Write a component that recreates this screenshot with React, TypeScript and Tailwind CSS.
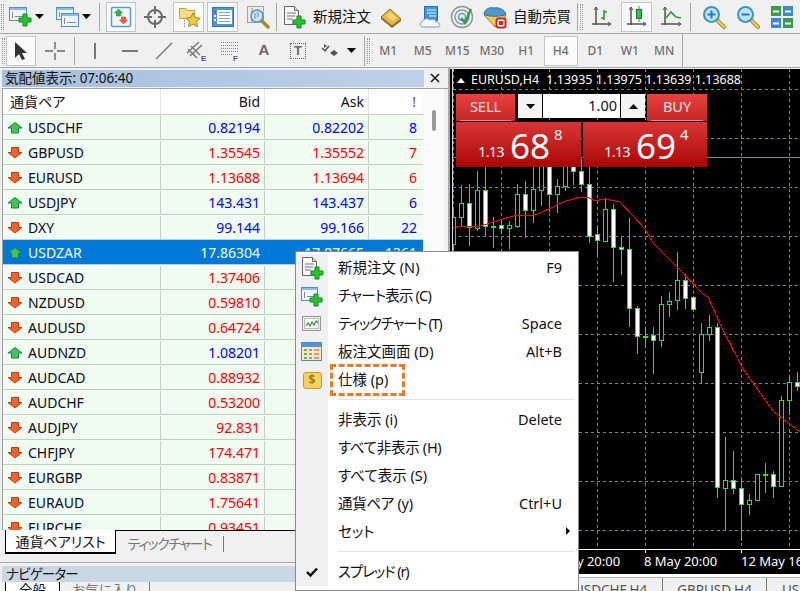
import type { ReactNode } from "react";

type Row = { name: string; bid: string; ask: string; spread: string; up: boolean; blue?: boolean };

const rows: Row[] = [
  { name: "USDCHF", bid: "0.82194", ask: "0.82202", spread: "8", up: true, blue: true },
  { name: "GBPUSD", bid: "1.35545", ask: "1.35552", spread: "7", up: false },
  { name: "EURUSD", bid: "1.13688", ask: "1.13694", spread: "6", up: false },
  { name: "USDJPY", bid: "143.431", ask: "143.437", spread: "6", up: true, blue: true },
  { name: "DXY", bid: "99.144", ask: "99.166", spread: "22", up: false, blue: true },
  { name: "USDZAR", bid: "17.86304", ask: "17.87665", spread: "1361", up: true },
  { name: "USDCAD", bid: "1.37406", ask: "", spread: "", up: false },
  { name: "NZDUSD", bid: "0.59810", ask: "", spread: "", up: false },
  { name: "AUDUSD", bid: "0.64724", ask: "", spread: "", up: false },
  { name: "AUDNZD", bid: "1.08201", ask: "", spread: "", up: true, blue: true },
  { name: "AUDCAD", bid: "0.88932", ask: "", spread: "", up: false },
  { name: "AUDCHF", bid: "0.53200", ask: "", spread: "", up: false },
  { name: "AUDJPY", bid: "92.831", ask: "", spread: "", up: false },
  { name: "CHFJPY", bid: "174.471", ask: "", spread: "", up: false },
  { name: "EURGBP", bid: "0.83871", ask: "", spread: "", up: false },
  { name: "EURAUD", bid: "1.75641", ask: "", spread: "", up: false },
  { name: "EURCHF", bid: "0.93451", ask: "", spread: "", up: false },
];

// x, high, low, body top, body bottom, white body
const candles: [number, number, number, number, number, boolean][] = [
  [453, 210, 250, 218, 245, false],
  [461, 186, 228, 204, 218, false],
  [469, 185, 247, 204, 228, true],
  [477, 172, 232, 191, 229, false],
  [485, 160, 237, 191, 227, true],
  [493, 218, 249, 227, 227, false],
  [501, 220, 235, 226, 229, true],
  [509, 222, 250, 226, 229, false],
  [517, 185, 229, 195, 227, false],
  [525, 182, 239, 195, 211, true],
  [533, 160, 224, 190, 211, false],
  [541, 160, 207, 160, 191, false],
  [549, 160, 213, 160, 195, true],
  [557, 180, 214, 187, 195, false],
  [565, 160, 192, 160, 187, false],
  [573, 160, 186, 160, 172, true],
  [581, 160, 193, 172, 185, true],
  [589, 160, 244, 185, 237, true],
  [597, 227, 256, 235, 241, true],
  [605, 199, 243, 210, 242, false],
  [613, 205, 283, 210, 248, true],
  [621, 238, 276, 248, 250, true],
  [629, 219, 328, 250, 309, true],
  [637, 307, 355, 309, 337, true],
  [645, 328, 346, 337, 337, false],
  [653, 328, 375, 336, 341, true],
  [661, 297, 348, 305, 341, false],
  [669, 293, 318, 302, 305, false],
  [677, 253, 311, 281, 301, false],
  [685, 275, 310, 281, 299, true],
  [693, 297, 310, 298, 310, true],
  [701, 324, 384, 335, 373, false],
  [709, 316, 342, 328, 335, false],
  [717, 324, 499, 328, 488, true],
  [725, 438, 531, 481, 489, false],
  [733, 452, 495, 481, 489, true],
  [741, 480, 542, 489, 505, true],
  [749, 495, 516, 501, 505, false],
  [757, 475, 502, 475, 501, false],
  [765, 464, 494, 475, 475, false],
  [773, 472, 499, 475, 487, true],
  [781, 397, 487, 401, 487, false],
  [789, 377, 416, 383, 401, false],
  [797, 373, 392, 383, 387, true],
];

const ma =
  "453,228 457,228 480,227 490,224 500,221 513,217 520,216 530,217 540,214 553,208 563,203 573,200 580,198 587,198 595,202 603,200 610,201 620,203 633,217 645,230 653,244 677,268 703,295 708,298 720,325 743,370 773,412 783,420 800,433";

const Plus = ({ x, y, s = 1 }: { x: number; y: number; s?: number }) => (
  <path
    transform={`translate(${x} ${y}) scale(${s})`}
    d="M4.500 .5h4v4h4v4h-4v4h-4v-4h-4v-4h4z"
    fill="#27c427"
    stroke="#0d8a26"
  />
);

const Win = ({ x, y, w, h }: { x: number; y: number; w: number; h: number }) => (
  <g>
    <rect x={x + 0.5} y={y + 0.5} width={w} height={h} fill="#eef5fc" stroke="#4c90d0" />
    <rect x={x + 1} y={y + 1} width={w - 1} height={2} fill="#8dbbe6" />
    <path d={`M${x + 3.5} ${y + 5}v${h - 7}M${x + 6} ${y + h - 3.500}h${w - 8}`} stroke="#7a8a9a" fill="none" />
  </g>
);

const Lens = ({ plus, minus }: { plus?: boolean; minus?: boolean }) => (
  <svg width="26" height="26" viewBox="0 0 26 26">
    <path d="M16 16l7 7" stroke="#a88a20" strokeWidth="4" strokeLinecap="round" />
    <path d="M16 16l7 7" stroke="#f0d060" strokeWidth="2" strokeLinecap="round" />
    <circle cx="10.500" cy="10.500" r="7.500" fill="#bfe3f7" stroke="#3f93c9" strokeWidth="2" />
    {plus && <path d="M6.500 10.500h8M10.500 6.500v8" stroke="#2a78b8" strokeWidth="2" />}
    {minus && <path d="M6.500 10.500h8" stroke="#2a78b8" strokeWidth="2" />}
  </svg>
);

const DocPlus = () => (
  <svg width="24" height="24" viewBox="0 0 24 24">
    <path d="M2.500 1.500h10l4 4v14h-14z" fill="#f6f6f6" stroke="#666" />
    <path d="M12.500 1.500v4h4" fill="#ddd" stroke="#666" />
    <path d="M5 8h9M5 11h8M5 14h6" stroke="#777" />
    <Plus x={10.500} y={10.500} />
  </svg>
);

const ChartPlus = () => (
  <svg width="24" height="24" viewBox="0 0 24 24">
    <Win x={1} y={3} w={16} h={13} />
    <Plus x={9.500} y={9.500} />
  </svg>
);

const TickBox = () => (
  <svg width="20" height="16" viewBox="0 0 20 16">
    <rect x=".5" y=".5" width="18" height="14" fill="#eee" stroke="#999" />
    <rect x="2.500" y="2.500" width="14" height="10" fill="#fff" stroke="#bbb" />
    <path d="M4 10l2-3 2 3 2-4 2 3 2-4 2 2" fill="none" stroke="#3a9a3a" strokeWidth="1.300" />
  </svg>
);

const DepthBox = () => (
  <svg width="22" height="20" viewBox="0 0 22 20">
    <rect x=".5" y=".5" width="20" height="18" fill="#f3e9c8" stroke="#4c90d0" />
    <rect x="1" y="1" width="19" height="4" fill="#4f94d4" />
    <path d="M3 7h3v2H3zm0 4h3v2H3zm0 4h3v2H3z" fill="#7aa850" />
    <path d="M8 7h3v2H8zm0 4h3v2H8zm0 4h3v2H8z" fill="#9a9a9a" />
    <path d="M13 7h5v2h-5zm0 4h5v2h-5zm0 4h5v2h-5z" fill="#e89a80" />
  </svg>
);

const Arrow = ({ up }: { up: boolean }) => (
  <svg width="16" height="12" viewBox="0 0 16 12" className="shrink-0">
    {up ? (
      <path d="M8 .5l7 5.500h-3.500v5h-7v-5H1z" fill="#41c159" stroke="#15893a" strokeLinejoin="round" />
    ) : (
      <path d="M4.500 .5h7v5H15l-7 5.500L1 5.500h3.500z" fill="#f2622c" stroke="#bf3c14" strokeLinejoin="round" />
    )}
  </svg>
);

const Caret = ({ className = "" }: { className?: string }) => (
  <svg width="9" height="5" viewBox="0 0 9 5" className={className}>
    <path d="M0 0h9L4.500 5z" fill="#000" />
  </svg>
);

const Cell = ({ w, children, pressed }: { w: string; children?: ReactNode; pressed?: boolean }) => (
  <div
    className={`${w} h-[30px] shrink-0 flex items-center justify-center ${
      pressed ? "bg-[#fafafa] border border-[#c4c4c4] shadow-[inset_0_0_0_1px_#fff]" : ""
    }`}
  >
    {children}
  </div>
);

const Sep = ({ w }: { w: string }) => (
  <div className={`${w} h-[28px] shrink-0 flex justify-center`}>
    <div className="w-px h-full bg-[#a8a8a8]" />
  </div>
);

const Handle = () => <div className="w-[3px] h-[26px] shrink-0 border-x border-dotted border-[#9a9a9a]" />;

const Period = ({ label, pressed }: { label: string; pressed?: boolean }) => (
  <div
    className={`w-[34.500px] h-[30px] shrink-0 flex items-center justify-center pt-[1px] text-[12px] font-medium text-[#707070] ${
      pressed ? "bg-[#fafafa] border border-[#c4c4c4]" : ""
    }`}
  >
    {label}
  </div>
);

const TopBar = () => (
  <div className="h-[34px] flex items-center border-b border-[#a6a6a6] overflow-hidden">
    <div className="w-[8px] shrink-0 pl-[1px]">
      <Handle />
    </div>
    <Cell w="w-[24px]">
      <svg width="24" height="22" viewBox="0 0 24 22">
        <Win x={1} y={1} w={17} h={13} />
        <Plus x={10.500} y={7.500} />
      </svg>
    </Cell>
    <Cell w="w-[14px]">
      <Caret />
    </Cell>
    <div className="w-[9px] shrink-0" />
    <Cell w="w-[24px]">
      <svg width="24" height="22" viewBox="0 0 24 22">
        <Win x={1} y={1} w={17} h={12} />
        <Win x={6} y={7} w={17} h={13} />
      </svg>
    </Cell>
    <Cell w="w-[14px]">
      <Caret />
    </Cell>
    <Sep w="w-[13px]" />
    <Cell w="w-[30px]" pressed>
      <svg width="22" height="22" viewBox="0 0 22 22">
        <rect x="1.500" y="1.500" width="19" height="19" rx="1.500" fill="#f4f8fc" stroke="#5a9bd5" strokeWidth="1.500" />
        <path d="M8.500 3l4 4h-2v3h-4V7h-2z" fill="#2fb64a" stroke="#15893a" strokeWidth=".6" />
        <path d="M11.500 11h4v3h2l-4 4-4-4h2z" fill="#f2622c" stroke="#bf3c14" strokeWidth=".6" />
      </svg>
    </Cell>
    <div className="w-[4px] shrink-0" />
    <Cell w="w-[30px]">
      <svg width="22" height="22" viewBox="0 0 22 22">
        <circle cx="11" cy="11" r="7" fill="none" stroke="#6a6a6a" strokeWidth="2" />
        <path d="M11 0v8M11 14v8M0 11h8M14 11h8" stroke="#6a6a6a" strokeWidth="2" />
      </svg>
    </Cell>
    <div className="w-[3px] shrink-0" />
    <Cell w="w-[31px]" pressed>
      <svg width="24" height="24" viewBox="0 0 24 24">
        <path d="M2.500 3.500h6l2 2h7v8h-15z" fill="#f6dc88" stroke="#c9a430" />
        <path d="M7.500 15v7" stroke="#777" strokeDasharray="1.500 1.500" />
        <path d="M16 8l2.200 4.600 5 .6-3.700 3.400 1 5L16 19l-4.500 2.600 1-5-3.700-3.400 5-.6z" fill="#f4c93e" stroke="#a98318" />
      </svg>
    </Cell>
    <div className="w-[3px] shrink-0" />
    <Cell w="w-[31px]" pressed>
      <svg width="22" height="20" viewBox="0 0 22 20">
        <rect x=".5" y=".5" width="21" height="19" fill="#4f96d6" stroke="#2f78bc" />
        <rect x="5" y="3" width="15" height="14" fill="#fff" />
        <path d="M2 4h2v2H2z" fill="#d33" />
        <path d="M2 8h2v2H2zM2 12h2v2H2z" fill="#f0f0f0" />
        <path d="M7 5.500h11M7 8.500h11M7 11.500h11M7 14.500h11" stroke="#7aa5cf" />
      </svg>
    </Cell>
    <div className="w-[5px] shrink-0" />
    <Cell w="w-[30px]">
      <svg width="24" height="24" viewBox="0 0 24 24">
        <rect x="1.500" y="1.500" width="16" height="16" fill="#f2e8e4" stroke="#a8a090" />
        <path d="M6 3v14M11 4v12" stroke="#888" />
        <path d="M15 15l7 7" stroke="#a88a20" strokeWidth="3.500" strokeLinecap="round" />
        <circle cx="11" cy="11" r="6" fill="#c5e6f7" fillOpacity=".9" stroke="#4d9ac9" strokeWidth="1.600" />
        <path d="M9 8v6M12 7v5" stroke="#888" />
      </svg>
    </Cell>
    <Sep w="w-[7px]" />
    <div className="w-[2px] shrink-0" />
    <Cell w="w-[24px]">
      <DocPlus />
    </Cell>
    <div className="w-[7px] shrink-0" />
    <div className="w-[66px] shrink-0 text-[14.500px] leading-none text-[#111] whitespace-nowrap">新規注文</div>
    <Cell w="w-[24px]">
      <svg width="24" height="22" viewBox="0 0 24 22">
        <path d="M2 11l9-8 11 10-9 7z" fill="#e5b640" stroke="#8a6a20" />
        <path d="M7 10l4-4 7 6-4 3z" fill="#f4d675" />
        <path d="M2 11v2l11 9 9-7v-2l-9 7z" fill="#8f6d22" />
      </svg>
    </Cell>
    <div className="w-[16px] shrink-0" />
    <Cell w="w-[24px]">
      <svg width="24" height="24" viewBox="0 0 24 24">
        <rect x="5.500" y="1.500" width="13" height="14" fill="#3e97dd" stroke="#2a6da8" />
        <path d="M8 5h9M8 8h9M10 11h7" stroke="#e4f2fc" />
        <path d="M4 22c-3 0-4-4-1-5 1-4 6-4 8-2 3-2 6 0 6 2 4 0 5 5 2 5z" fill="#f4f6f8" stroke="#7f9ab0" />
      </svg>
    </Cell>
    <div className="w-[7px] shrink-0" />
    <Cell w="w-[24px]">
      <svg width="24" height="24" viewBox="0 0 24 24">
        <circle cx="12" cy="12" r="10.500" fill="#eaeff2" stroke="#8a959c" strokeWidth="1.500" />
        <circle cx="12" cy="12" r="7" fill="none" stroke="#8a9aa3" strokeWidth="1.500" />
        <circle cx="12" cy="12" r="3.500" fill="none" stroke="#5aa2c9" strokeWidth="1.500" />
        <path d="M11 13l4 5 6-14" fill="none" stroke="#2f9a3f" strokeWidth="2.200" />
      </svg>
    </Cell>
    <div className="w-[9px] shrink-0" />
    <Cell w="w-[24px]">
      <svg width="24" height="24" viewBox="0 0 24 24">
        <path d="M1 10l11 12 8-6 3-6z" fill="#f0cb52" stroke="#a5811f" />
        <path d="M1 9c1-6 7-7 10-6 4-1 10 1 12 6-4 3-18 3-22 0z" fill="#4f98d0" stroke="#2f6e9f" />
        <rect x="13.500" y="13.500" width="9" height="9" rx="2" fill="#fff" stroke="#d22" strokeWidth="2" />
        <rect x="16" y="16" width="4" height="4" fill="#d22" />
      </svg>
    </Cell>
    <div className="w-[6px] shrink-0" />
    <div className="w-[64px] shrink-0 text-[14.500px] leading-none text-[#111] whitespace-nowrap">自動売買</div>
    <div className="w-px h-[28px] shrink-0 bg-[#a8a8a8]" />
    <div className="w-[2px] shrink-0" />
    <Handle />
    <div className="w-[6px] shrink-0" />
    <Cell w="w-[26px]">
      <svg width="22" height="22" viewBox="0 0 22 22">
        <path d="M5 1v18M1 18h19" stroke="#4a5a4a" strokeWidth="1.500" />
        <path d="M3 4l2-3 2 3M17 16l3 2-3 2" fill="none" stroke="#4a5a4a" />
        <path d="M13 4v10M13 6h3M10 12h3" stroke="#2e9a3a" strokeWidth="1.600" fill="none" />
      </svg>
    </Cell>
    <div className="w-[6px] shrink-0" />
    <Cell w="w-[31px]" pressed>
      <svg width="22" height="24" viewBox="0 0 22 24">
        <path d="M5 2v18M1 19h19" stroke="#4a5a4a" strokeWidth="1.500" />
        <path d="M3 5l2-3 2 3M17 17l3 2-3 2" fill="none" stroke="#4a5a4a" />
        <path d="M13 1v16" stroke="#2e9a3a" />
        <rect x="10.500" y="4.500" width="5" height="9" fill="#2fc144" stroke="#1a7d2c" />
      </svg>
    </Cell>
    <div className="w-[7px] shrink-0" />
    <Cell w="w-[26px]">
      <svg width="24" height="22" viewBox="0 0 24 22">
        <path d="M5 1v18M1 18h20" stroke="#4a5a4a" strokeWidth="1.500" />
        <path d="M3 4l2-3 2 3M18 16l3 2-3 2" fill="none" stroke="#4a5a4a" />
        <path d="M6 12l5-6 5 5 5 1" fill="none" stroke="#2e9a3a" strokeWidth="1.600" />
      </svg>
    </Cell>
    <Sep w="w-[10px]" />
    <div className="w-[6px] shrink-0" />
    <Cell w="w-[26px]">
      <Lens plus />
    </Cell>
    <div className="w-[8px] shrink-0" />
    <Cell w="w-[26px]">
      <Lens minus />
    </Cell>
    <div className="w-[9px] shrink-0" />
    <Cell w="w-[24px]">
      <svg width="22" height="22" viewBox="0 0 22 22">
        <rect width="10" height="10" fill="#3c9a4c" />
        <rect x="12" width="10" height="10" fill="#3b8bd3" />
        <rect y="12" width="10" height="10" fill="#3b8bd3" />
        <rect x="12" y="12" width="10" height="10" fill="#3c9a4c" />
        <path d="M2 4.500h6v2H2zm12 0h6v2h-6zM2 16.500h6v2H2zm12 0h6v2h-6z" fill="#fff" />
      </svg>
    </Cell>
  </div>
);

const DrawBar = () => (
  <div className="h-[34px] flex items-center border-b border-[#a6a6a6] overflow-hidden">
    <div className="w-[6px] shrink-0 pl-[2px]">
      <Handle />
    </div>
    <Cell w="w-[30px]" pressed>
      <svg width="16" height="20" viewBox="0 0 16 20">
        <path d="M2 1v16l4-4 3 6 3-1-3-6h5z" fill="#333" />
      </svg>
    </Cell>
    <div className="w-[4px] shrink-0" />
    <Cell w="w-[30px]">
      <svg width="22" height="22" viewBox="0 0 22 22">
        <path d="M1 11h8M13 11h8M11 2v7M11 13v7" stroke="#666" strokeWidth="1.400" />
      </svg>
    </Cell>
    <Sep w="w-[8px]" />
    <Cell w="w-[34px]">
      <div className="w-[2px] h-[16px] bg-[#777]" />
    </Cell>
    <Cell w="w-[36px]">
      <div className="w-[16px] h-[2px] bg-[#777]" />
    </Cell>
    <Cell w="w-[32px]">
      <svg width="18" height="18" viewBox="0 0 18 18">
        <path d="M1 17L17 1" stroke="#777" strokeWidth="1.500" />
      </svg>
    </Cell>
    <Cell w="w-[34px]">
      <svg width="22" height="22" viewBox="0 0 22 22">
        <path d="M1 13L13 2M4 16L16 5M2 9l9 9M5 6l9 9" stroke="#777" strokeWidth="1.500" />
        <text x="15" y="21" fontSize="8" fontWeight="700" fill="#555" fontFamily="Liberation Sans">E</text>
      </svg>
    </Cell>
    <Cell w="w-[33px]">
      <svg width="22" height="22" viewBox="0 0 22 22">
        <path d="M1 2.500h18M1 5.500h18M1 8.500h18M1 11.500h18M1 14.500h12" stroke="#888" strokeDasharray="1 1" />
        <text x="13" y="21" fontSize="8" fontWeight="700" fill="#555" fontFamily="Liberation Sans">F</text>
      </svg>
    </Cell>
    <Cell w="w-[34px]">
      <span className="text-[15px] font-bold text-[#666] font-['Liberation_Sans',sans-serif]">A</span>
    </Cell>
    <Cell w="w-[34px]">
      <div className="w-[16px] h-[16px] border border-dotted border-[#666] flex items-center justify-center text-[13px] font-bold leading-none text-[#666] font-['Liberation_Sans',sans-serif]">
        T
      </div>
    </Cell>
    <Cell w="w-[32px]">
      <svg width="20" height="16" viewBox="0 0 20 16">
        <path d="M1 5l3 3 4-5" fill="none" stroke="#555" strokeWidth="1.500" />
        <path d="M3 1l3 2-3 2zM9 10l4-3 4 3-4 3z" fill="#555" />
      </svg>
    </Cell>
    <div className="w-[11px] shrink-0 flex justify-start">
      <Caret />
    </div>
    <div className="w-[6px] shrink-0" />
    <div className="w-px h-[30px] shrink-0 bg-[#a8a8a8]" />
    <div className="w-[2px] shrink-0" />
    <Handle />
    <div className="w-[1px] shrink-0" />
    <Period label="M1" />
    <Period label="M5" />
    <Period label="M15" />
    <Period label="M30" />
    <Period label="H1" />
    <Period label="H4" pressed />
    <Period label="D1" />
    <Period label="W1" />
    <Period label="MN" />
    <div className="w-px h-[34px] shrink-0 bg-[#a8a8a8]" />
  </div>
);

const WatchRow = ({ row }: { row: Row }) => {
  const selected = row.name === "USDZAR";
  const price = selected ? "text-white" : row.blue ? "text-[#0000ff]" : "text-[#ff0000]";
  const line = selected ? "border-[#0078d7]" : "border-[#c4cfc4]";
  return (
    <div className={`h-[25px] flex pt-px border-b border-[#c4cfc4] ${selected ? "bg-[#0078d7]" : "bg-[#f1fcf1]"}`}>
      <div className={`w-[158px] flex items-center gap-[5px] pl-[4px] border-r ${line} ${selected ? "text-white" : "text-[#0a0a1e]"}`}>
        <Arrow up={row.up} />
        <span>{row.name}</span>
      </div>
      <div className={`w-[104px] flex items-center justify-end pr-[4px] border-r ${line} ${price}`}>{row.bid}</div>
      <div className={`w-[104px] flex items-center justify-end pr-[4px] border-r ${line} ${price}`}>{row.ask}</div>
      <div className={`w-[54px] flex items-center justify-end pr-[6px] ${price}`}>{row.spread}</div>
    </div>
  );
};

const MarketWatch = () => (
  <div className="h-[462px] shrink-0 flex flex-col">
    <div className="h-[20px] flex items-center">
      <div className="w-[422px] ml-[2px] h-[17px] pl-[3px] flex items-center bg-gradient-to-r from-[#a5bedb] to-[#bdd2ea] text-[13.500px] text-[#111]">
        気配値表示: 07:06:40
      </div>
      <svg width="10" height="10" viewBox="0 0 10 10" className="ml-[6px]">
        <path d="M1 1l8 8M9 1l-8 8" stroke="#111" strokeWidth="1.500" />
      </svg>
    </div>
    <div className="flex-1 flex overflow-hidden ml-[2px] border-t border-l border-[#a0a0a0]">
      <div className="w-[420px] text-[14px] leading-none">
        <div className="h-[26px] flex bg-white border-b border-[#c4cfc4] text-[#111]">
          <div className="w-[158px] flex items-center pl-[7px] border-r border-[#e4e4e4]">通貨ペア</div>
          <div className="w-[104px] flex items-center justify-end pr-[4px] border-r border-[#e4e4e4]">Bid</div>
          <div className="w-[104px] flex items-center justify-end pr-[4px] border-r border-[#e4e4e4]">Ask</div>
          <div className="w-[54px] flex items-center justify-end pr-[7px] text-[#555]">!</div>
        </div>
        {rows.map((row) => (
          <WatchRow key={row.name} row={row} />
        ))}
      </div>
      <div className="w-[21px] bg-[#fafafa] flex justify-center pt-[21px]">
        <div className="w-[4px] h-[21px] rounded-full bg-[#9a9a9a]" />
      </div>
    </div>
  </div>
);

const LeftPanel = () => (
  <div className="w-[450px] shrink-0 flex flex-col border-r-2 border-[#a8a8a8] overflow-hidden">
    <MarketWatch />
    <div className="h-[32px] shrink-0 border-t border-black ml-[5px] flex items-start text-[14px] whitespace-nowrap">
      <div className="h-[24px] w-[111px] -mt-px bg-white border-x border-black border-b-2 flex items-center justify-center text-[#111]">
        通貨ペアリスト
      </div>
      <div className="w-[107px] h-[24px] flex items-center justify-center tracking-[-1.4px] text-[#777]">ティックチャート</div>
      <div className="w-px h-[16px] mt-[5px] bg-[#777]" />
    </div>
    <div className="h-[4px] shrink-0 border-t border-[#a8a8a8]" />
    <div className="h-[16px] shrink-0 ml-[2px] pl-[4px] flex items-center bg-[#c9d6e4] text-[13.500px] tracking-[-0.8px] text-[#111]">ナビゲーター</div>
    <div className="h-[9px] shrink-0 ml-[5px] flex text-[13.500px] leading-[16px] overflow-hidden whitespace-nowrap">
      <div className="w-[55px] bg-white border-x border-black text-center text-[#111]">全般</div>
      <div className="w-[89px] text-center text-[#777]">お気に入り</div>
      <div className="w-px bg-[#777]" />
    </div>
  </div>
);

const Chart = () => (
  <svg width="347" height="504" viewBox="453 70 347 504" className="block" fontFamily="Noto Sans">
    {[453, 501, 549, 597, 645, 693, 741, 789].map((x) => (
      <path key={x} d={`M${x + 0.5} 70V550`} stroke="#778899" strokeDasharray="3 3" />
    ))}
    {[90, 139, 188, 237, 286, 335, 384, 433, 482, 531].map((y) => (
      <path key={y} d={`M453 ${y + 0.5}H800`} stroke="#778899" strokeDasharray="3 3" />
    ))}
    <path d="M453 158.500H800" stroke="#778899" />
    {candles.map(([x, high, low, top, bottom, white]) => (
      <g key={x} shapeRendering="crispEdges">
        <path d={`M${x + 0.5} ${high}V${low}`} stroke="#00ff00" />
        {top === bottom ? (
          <path d={`M${x - 2} ${top + 0.5}h5`} stroke="#00ff00" strokeWidth="2" />
        ) : (
          <rect x={x - 1.5} y={top + 0.5} width={4} height={bottom - top} fill={white ? "#fff" : "#000"} stroke="#00ff00" />
        )}
      </g>
    ))}
    <polyline points={ma} fill="none" stroke="#ff0000" shapeRendering="crispEdges" />
    <path d="M453 550.500H800M549.500 550v4M645.500 550v4M741.500 550v4" stroke="#fff" />
    <g fill="#fff" fontSize="13">
      <text x="547" y="567">7 May 20:00</text>
      <text x="644" y="567">8 May 20:00</text>
      <text x="741" y="567">12 May 16:00</text>
    </g>
  </svg>
);

const Control = ({ children, w }: { children: ReactNode; w: string }) => (
  <div className={`${w} h-full bg-[#f4f4f4] flex items-center justify-center`}>{children}</div>
);

const Quote = ({ big, small, w }: { big: string; small: string; w: string }) => (
  <div className={`${w} h-[45px] bg-gradient-to-b from-[#d93434] to-[#ab0000] flex items-end justify-end pr-[19px] text-white`}>
    <span className="text-[14px] tracking-[-0.5px] leading-none mb-[8px] mr-[6px]">1.13</span>
    <span className="text-[35px] leading-none mb-[4px] mr-[4px]">{big}</span>
    <span className="text-[15px] leading-none mb-[25px] w-[8px]">{small}</span>
  </div>
);

const OrderPanel = () => (
  <div className="absolute left-[6px] top-[25px] w-[251px] flex flex-col gap-[1px] text-white">
    <div className="flex h-[27px]">
      <div className="w-[59px] bg-gradient-to-b from-[#ea4040] to-[#c82525] px-[4px] flex flex-col">
        <div className="flex-1 flex items-center justify-center text-[14.500px] text-[#ffe2e2]">SELL</div>
        <div className="h-px bg-[#f28080]" />
      </div>
      <div className="w-[3px]" />
      <div className="w-[127px] h-[24px] flex gap-[1px] text-[#111]">
        <Control w="w-[24px]">
          <Caret />
        </Control>
        <div className="w-[77px] h-full bg-white flex items-center justify-end pr-[3px] text-[14.500px]">1.00</div>
        <Control w="w-[24px]">
          <Caret className="rotate-180" />
        </Control>
      </div>
      <div className="w-[2px]" />
      <div className="w-[60px] bg-gradient-to-b from-[#ea4040] to-[#c82525] px-[4px] flex flex-col">
        <div className="flex-1 flex items-center justify-center text-[14.500px] text-[#ffe2e2]">BUY</div>
        <div className="h-px bg-[#f28080]" />
      </div>
    </div>
    <div className="flex gap-[2px]">
      <Quote big="68" small="8" w="w-[125px]" />
      <Quote big="69" small="4" w="w-[124px]" />
    </div>
  </div>
);

const ChartPanel = () => (
  <div className="flex-1 flex flex-col overflow-hidden pt-px">
    <div className="h-[505px] bg-black pl-[3px] relative overflow-hidden shrink-0">
      <div className="absolute left-[2px] top-0 w-px h-full bg-[#d8d8d8]" />
      <Chart />
      <div className="absolute left-[7px] top-[5px] flex items-center text-[12.500px] leading-none text-white whitespace-nowrap">
        <svg width="8" height="5" viewBox="0 0 8 5" className="mr-[6px]">
          <path d="M0 5h8L4 0z" fill="#fff" />
        </svg>
        <span className="mr-[7px]">EURUSD,H4</span>
        <span>1.13935 1.13975 1.13639 1.13688</span>
      </div>
      <OrderPanel />
    </div>
    <div className="h-[3px] bg-white shrink-0" />
    <div className="h-[1px] bg-[#b4b4b4] shrink-0" />
    <div className="flex-1 flex pl-[109px] text-[13.500px] leading-none text-[#555] bg-[#f0f0f0] pt-[6px]">
      <div className="w-[104px] flex justify-center whitespace-nowrap border-r border-[#777] -mt-[6px] pt-[6px]">USDCHF,H4</div>
      <div className="w-[104px] flex justify-center whitespace-nowrap border-r border-[#777] -mt-[6px] pt-[6px]">GBPUSD,H4</div>
      <div className="w-[33px] pl-[15px]">US</div>
    </div>
  </div>
);

const MenuItem = ({
  icon,
  label,
  keyName,
  sub,
  marked,
  tight = "",
}: {
  icon?: ReactNode;
  label: string;
  keyName?: string;
  sub?: boolean;
  marked?: boolean;
  tight?: string;
}) => (
  <div className="h-[28px] flex items-center relative">
    <div className="w-[32px] h-full shrink-0 bg-[#f0f0f0] flex items-center justify-center">{icon}</div>
    <div className="flex-1 pl-[10px] pb-[2px] flex items-center justify-between pr-[16px] text-[#111]">
      <span className={tight}>{label}</span>
      {keyName && <span>{keyName}</span>}
      {sub && <div className="absolute right-[8px] w-0 h-0 border-y-[4px] border-y-transparent border-l-[4px] border-l-black" />}
    </div>
    {marked && (
      <div className="absolute left-[34px] top-[-2px] w-[75px] h-[32px] border-[3px] border-dashed border-[#ee7722]" />
    )}
  </div>
);

const MenuSep = () => (
  <div className="h-[12px] flex">
    <div className="w-[32px] bg-[#f0f0f0]" />
    <div className="flex-1 pl-[10px] pr-[4px] pt-[5px]">
      <div className="h-px bg-[#e4e4e4]" />
    </div>
  </div>
);

const ContextMenu = () => (
  <div className="absolute left-[295px] top-[251px] w-[284px] h-[340px] bg-white border border-[#8a8a8a] pt-[2px] overflow-hidden text-[14.500px] leading-none">
    <MenuItem icon={<DocPlus />} label="新規注文 (N)" keyName="F9" />
    <MenuItem icon={<ChartPlus />} label="チャート表示 (C)" tight="tracking-[-0.8px]" />
    <MenuItem icon={<TickBox />} label="ティックチャート (T)" keyName="Space" tight="tracking-[-1.3px]" />
    <MenuItem icon={<DepthBox />} label="板注文画面 (D)" keyName="Alt+B" />
    <MenuItem
      icon={
        <div className="w-[19px] h-[17px] rounded-[3px] bg-[#f6d25c] border border-[#c69c2e] flex items-center justify-center text-[12px] font-bold text-[#a87d16]">
          $
        </div>
      }
      label="仕様 (p)"
      marked
    />
    <MenuSep />
    <MenuItem label="非表示 (i)" keyName="Delete" />
    <MenuItem label="すべて非表示 (H)" tight="tracking-[-0.3px]" />
    <MenuItem label="すべて表示 (S)" />
    <MenuItem label="通貨ペア (y)" keyName="Ctrl+U" tight="tracking-[-0.3px]" />
    <MenuItem label="セット" sub />
    <MenuSep />
    <MenuItem
      icon={
        <svg width="12" height="10" viewBox="0 0 12 10">
          <path d="M1 5l3.500 3.500L11 1.500" fill="none" stroke="#000" strokeWidth="2.400" />
        </svg>
      }
      label="スプレッド (r)"
      tight="tracking-[-1.1px]"
    />
  </div>
);

export default function App() {
  return (
    <div className="relative w-[800px] h-[591px] overflow-hidden bg-[#f0f0f0] [font-feature-settings:'palt'] font-['Noto_Sans','Noto_Sans_CJK_JP',sans-serif]">
      <TopBar />
      <DrawBar />
      <div className="h-[523px] flex">
        <LeftPanel />
        <ChartPanel />
      </div>
      <ContextMenu />
    </div>
  );
}
